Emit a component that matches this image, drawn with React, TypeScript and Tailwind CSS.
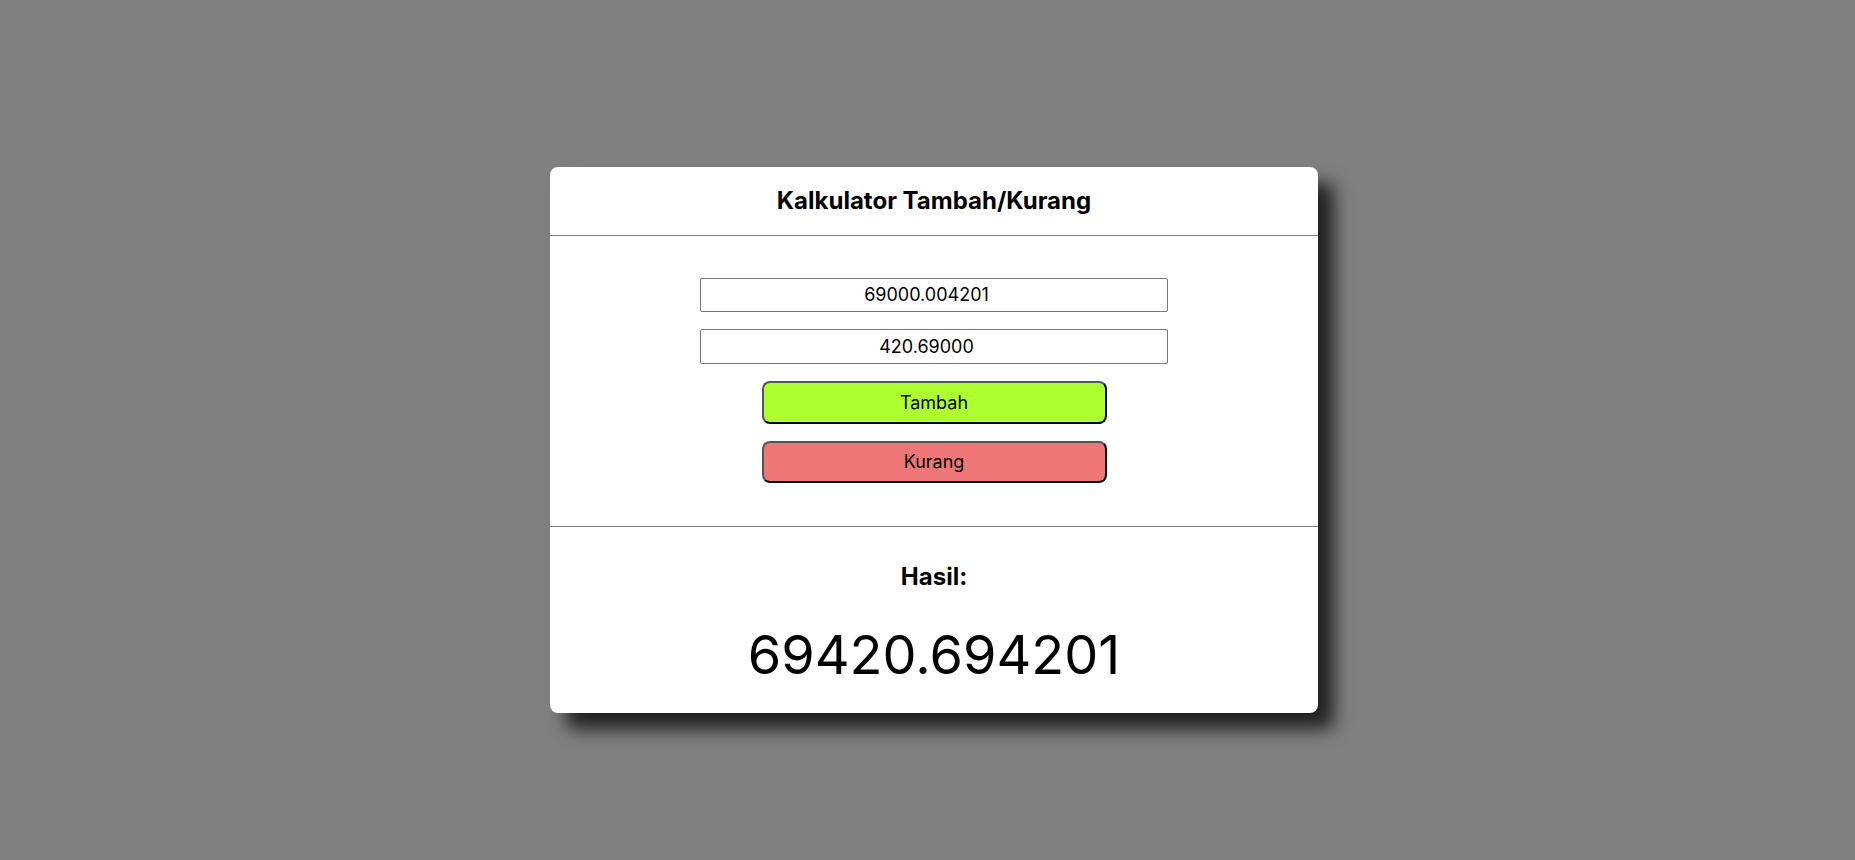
import React from "react";

export default function App() {
  return (
    <div
      className="w-full h-screen bg-[#808080] flex items-center justify-center pl-[13px] pt-[19px]"
      style={{ fontFamily: "Inter, 'Noto Sans', sans-serif" }}
    >
      <div className="w-[768px] bg-white rounded-[8px] shadow-[16px_16px_18px_rgba(0,0,0,0.75)] flex flex-col">
        <div className="h-[69px] flex items-center justify-center border-b border-[#808080]">
          <h1 className="text-[24px] leading-[32px] font-bold text-black">Kalkulator Tambah/Kurang</h1>
        </div>
        <div className="flex flex-col items-center pt-[42px] pb-[43px] gap-[17px] border-b border-[#808080]">
          <input
            type="number"
            readOnly
            value="69000.004201"
            className="w-[468px] h-[34px] px-[2px] border border-[#767676] rounded-[2px] text-center text-[18px] text-black outline-none"
          />
          <input
            type="number"
            readOnly
            value="420.69000"
            className="w-[468px] h-[35px] px-[2px] border border-[#767676] rounded-[2px] text-center text-[18px] text-black outline-none"
          />
          <button className="w-[345px] h-[43px] bg-[#adff2f] rounded-[8px] border-2 border-t-[#555] border-l-[#555] border-r-black border-b-black text-[18px] text-black">
            Tambah
          </button>
          <button className="w-[345px] h-[42px] bg-[#ef7777] rounded-[8px] border-2 border-t-[#555] border-l-[#555] border-r-black border-b-black text-[18px] text-black">
            Kurang
          </button>
        </div>
        <div className="flex flex-col items-center pt-[34px] pb-[31px]">
          <h2 className="text-[24px] leading-[32px] font-bold text-black">Hasil:</h2>
          <div className="mt-[34px] text-[54px] leading-[55px] text-black">69420.694201</div>
        </div>
      </div>
    </div>
  );
}
